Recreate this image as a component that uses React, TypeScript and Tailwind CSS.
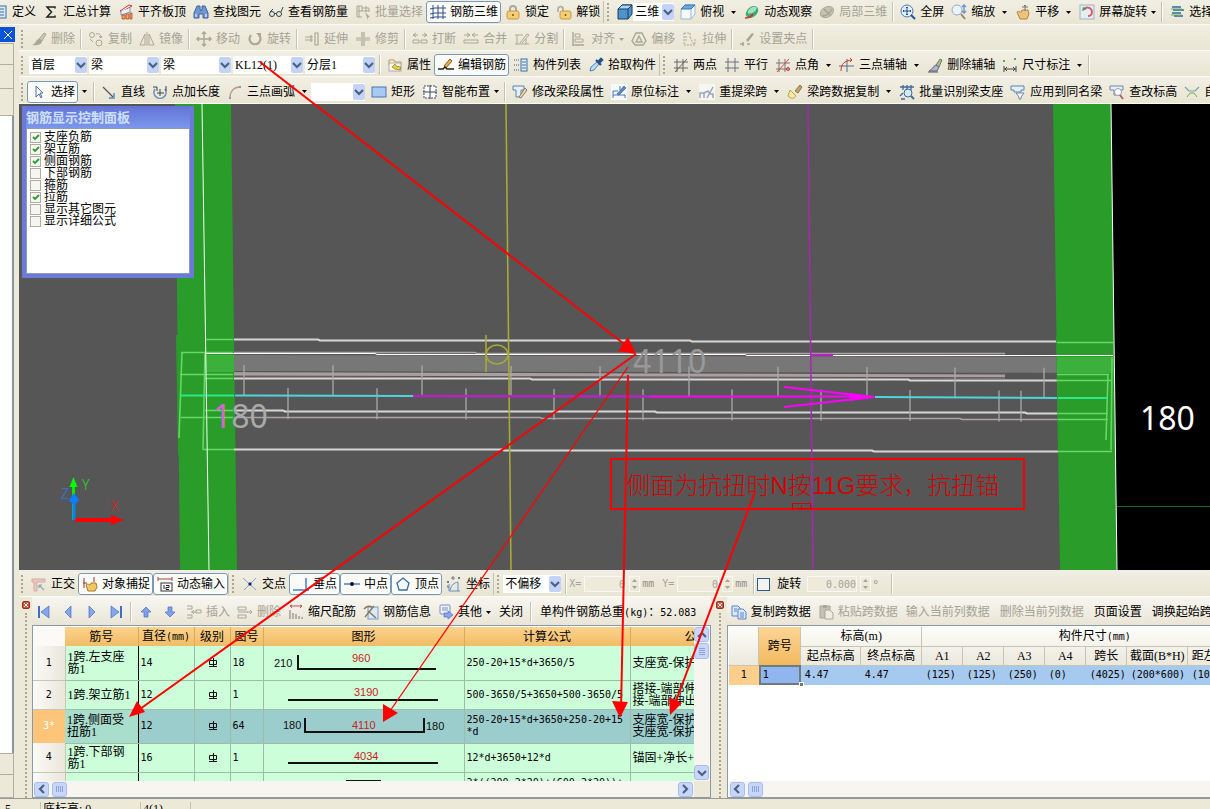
import type { ReactNode } from 'react'

const B = '#3a6ea5'
const G = '#a9a797'

// 16x16 drawings used on the toolbars
const icons: Record<string, ReactNode> = {
  define: <><rect x="2" y="2" width="12" height="12" fill="#dce9fb" stroke={B} /><path d="M4 5h8M4 8h8M4 11h8" stroke={B} /></>,
  sum: <path d="M12 4.500V3H4l4.500 5L4 13h8v-1.500" stroke="#222" strokeWidth="1.500" />,
  alignTop: <><path d="M2 7 11 1l3 1-9 5z" fill="#fff" stroke="#c33" /><path d="M3 7v4l9-3V4" fill="#eef3fc" stroke="#7b8db5" /><path d="M4 15V11h3v4zM8 15v-5h3v5zM12 15V9h2v6z" fill="#f0b04a" stroke="#a33" strokeWidth=".7" /></>,
  find: <><path d="M4 2h3v3l1 2 1-2V2h3l3 7v5h-5v-4H6v4H1V9z" fill="#6f97d2" stroke="#3d6199" /><path d="M3 10v3M13 10v3" stroke="#cfe0ff" strokeWidth="1.500" /></>,
  glasses: <><circle cx="4" cy="10" r="2.500" stroke="#345" /><circle cx="11" cy="10" r="2.500" stroke="#345" /><path d="M6.500 9.500h2M2 8l3-3M13 8l2-5" stroke="#345" /></>,
  batch: <><path d="M2 2h5v5H2zM2 7v6h5M7 4h7v4M7 7h7M4 2v11M11 2v6" stroke={G} /><path d="m10 8 5 5-2 .5V16z" fill={G} /></>,
  grid3d: <path d="M3 1v14M8 1v14M13 1v14M0 5l5-1h11M0 10l5-1h11M0 14l5-1h11" stroke="#2f4f8a" />,
  lock: <><path d="M5 8V5a3 3 0 0 1 6 0v3" stroke="#a9a9a0" strokeWidth="2" /><rect x="2" y="7" width="12" height="8" rx="2" fill="#f5cd74" stroke="#c59a42" /><path d="M8 10v2" stroke="#7a5510" strokeWidth="1.500" /></>,
  unlock: <><path d="M2 8V5a2.500 2.500 0 0 1 5 0v3" stroke="#a9a9a0" strokeWidth="1.600" /><rect x="4" y="7" width="11" height="8" rx="2" fill="#f5cd74" stroke="#c59a42" /><path d="M9.500 10v2" stroke="#7a5510" strokeWidth="1.500" /></>,
  cube: <><path d="m1 5 4-4h10v9l-4 5H1z" fill="#4f93c9" stroke="#173f66" /><path d="m1 5 4-4h10l-4 4z" fill="#a7d5f3" stroke="#173f66" /><path d="M11 5v10" stroke="#173f66" /></>,
  cubeTop: <><path d="m1 5 4-4h10v9l-4 5H1z" fill="#f4f9ff" stroke="#9db8d3" /><path d="m1 5 4-4h10l-4 4z" fill="#69abe0" stroke="#3b76a8" /><path d="M11 5v10" stroke="#9db8d3" /></>,
  orbit: <><ellipse cx="8" cy="8" rx="7" ry="5" transform="rotate(-40 8 8)" fill="#3fae72" /><path d="M4 7c2-4 6-5 8-4s-1 5-4 6-5 1-4-2z" fill="#a4dfc6" /><path d="M1 14c3 0 6-1 8-4" stroke="#c33" strokeWidth="1.600" /></>,
  part3d: <><ellipse cx="8" cy="8" rx="7" ry="5" transform="rotate(-30 8 8)" fill="#c5c2b2" stroke={G} /><path d="M3 12c4 0 8-3 10-7M5 5l6 6" stroke="#a5a394" strokeWidth="1.500" /></>,
  full: <><circle cx="7" cy="7" r="6" fill="#e4f0ff" stroke="#4b76b5" /><path d="M7 3v8M3 7h8M6 4l1-1 1 1M6 10l1 1 1-1M4 6 3 7l1 1M10 6l1 1-1 1" stroke="#234f96" /><path d="m11 11 4 4" stroke="#234f96" strokeWidth="2" /></>,
  zoom: <><circle cx="6" cy="6" r="5" fill="#eaf4ff" stroke="#9aa9bd" /><path d="m10 10 4 5" stroke="#9a8468" strokeWidth="2" /><path d="M13 1v8M11 3l2-2 2 2M11 7l2 2 2-2" stroke="#6b93c8" strokeWidth="1.300" /></>,
  pan: <><path d="M2 8c2-2 3 1 4 0l1-2h6l1 4-2 5H5z" fill="#edc27c" stroke="#b58538" /><path d="M10 1v6M7 3h6M9 2l1-1 1 1" stroke="#777" /></>,
  rotScreen: <><rect x="1" y="1" width="14" height="14" fill="#e4ecf4" stroke="#9db4cc" /><path d="M5 5c3-3 8-1 8 3 0 3-2 4-4 4" stroke="#e0566a" strokeWidth="1.800" /><path d="M3 7l1-4 4 2z" fill="#4a9a4a" /></>,
  selLayer: <><path d="M3 3h9M4 6h11M3 9h9M5 12h9" stroke="#2c6b9c" strokeWidth="1.600" /><path d="M2 5h11M2 11h11" stroke="#69a860" /></>,
  brush: <><path d="m8 8 5-6 2 1-4 7z" fill="#c9c6b6" stroke={G} /><path d="M8 8c-3 0-3 5-7 6 4 1 10 0 10-4z" fill={G} /></>,
  copyG: <><circle cx="4" cy="4" r="2.500" stroke={G} /><circle cx="11" cy="12" r="3" stroke={G} /><path d="M8 3c4-1 5 1 5 4M11 5l2 2 1-2M2 8l3 3" stroke={G} /></>,
  mirror: <path d="M6 3v11H1zM10 3v11h5zM8 1v14" stroke={G} />,
  move: <path d="M8 1v14M1 8h14M6 3l2-2 2 2M6 13l2 2 2-2M3 6 1 8l2 2M13 6l2 2-2 2" stroke={G} strokeWidth="1.400" />,
  rotate: <><path d="M4 4a5.500 5.500 0 1 0 8 0" stroke={G} strokeWidth="2.200" /><path d="M9 2h5v5z" fill={G} /></>,
  extend: <path d="M1 6h8M1 9h8M7 4v7M11 2h3v12h-3z" stroke={G} strokeWidth="1.200" />,
  trim: <path d="M1 7h5M10 7h5M1 9h5M10 9h5M7 1v14M9 1v14" stroke={G} strokeWidth="1.200" />,
  brk: <path d="M1 4h5M10 4h5M4 2 1 4l3 2M12 2l3 2-3 2M1 9h6v3H1zM9 9h6v3H9z" stroke={G} />,
  merge: <path d="M1 4h5M10 4h5M4 2l3 2-3 2M12 2 9 4l3 2M1 9h14v3H1z" stroke={G} />,
  split: <path d="M1 4h8M1 13h14M3 4v9M6 12l7-9 2 1-7 8M12 8v5" stroke={G} />,
  alignG: <><path d="M2 1v14M2 14h11" stroke={G} strokeWidth="1.400" /><path d="M4 3h5v3H4zM4 8h8v3H4z" stroke={G} /></>,
  offset: <path d="M5 2h6l4 8-3 4H4l-3-4zM8 5l3 6H5z" stroke={G} strokeWidth="1.400" />,
  stretch: <path d="M2 2h6v4M2 2v12h11V7M8 6l4 8M4 5v6" stroke={G} strokeDasharray="2 1" />,
  gripEdit: <><path d="M7 9 13 2l2 1-6 8z" fill={G} /><path d="M1 13h4M8 13h3M4 11v4" stroke={G} strokeWidth="1.500" /></>,
  props: <><path d="M2 3h5l1 2h6v3H2z" fill="#fff0c0" stroke="#b09c60" /><rect x="2" y="6" width="12" height="8" fill="#fdf9e8" stroke="#aaa" /><path d="m5 10 3-3 1 2 5 1-1 3-5-1z" fill="#e8d04a" stroke="#7a6a20" strokeWidth=".6" /></>,
  editBar: <><path d="m6 9 6-7 2 2-6 7z" fill="#e8b04c" stroke="#8b5a1c" /><path d="M0 12h5l2-2 2 2h7" stroke="#222" strokeWidth="1.500" /></>,
  list: <><path d="M1 3h3M1 8h3M1 13h3M5 3h1M5 8h1M5 13h1" stroke="#456" strokeDasharray="1 1" /><rect x="8" y="2" width="6" height="12" fill="#e3edfb" stroke={B} /><path d="M9 5h4M9 8h4M9 11h4" stroke={B} /></>,
  pick: <><path d="m2 14 1-4 6-5 2 2-5 6z" fill="#bcdcf8" stroke="#4d82bd" /><path d="m8 3 5 5M10 5l3-3 1 1-3 3" stroke="#27518a" strokeWidth="2.400" /></>,
  twoPt: <path d="M4 2v13M10 2v13M1 5h14M1 11h14M2 15 14 2" stroke="#666" />,
  parallel: <path d="M4 1v14M11 1v14M1 5h14M1 11h14" stroke="#6b6f80" />,
  ptAngle: <><path d="M4 2v13M10 2v13M1 6h14M1 12h14" stroke="#777" /><path d="M2 15 14 2" stroke="#d44" /><circle cx="13" cy="12" r="1.500" stroke="#c33" /></>,
  threeAx: <><path d="M8 2v13M0 9h15" stroke="#5a6b8a" /><path d="M2 14C2 7 5 4 13 3M11 1l2 2-2 2" stroke="#c33" /></>,
  delAx: <><path d="m9 8 4-6 2 1-3 7z" fill="#a6c870" stroke="#777" /><path d="M9 8c-3 1-3 4-7 6h8l2-4z" fill="#aab4d8" stroke="#667" /><path d="M1 15h10" stroke="#555" /></>,
  dim: <><path d="M2 9v6M14 9v6M2 12h12M5 10l-2 2 2 2M11 10l2 2-2 2" stroke="#444" /><path d="M1 4h2M12 2h2" stroke="#5aa85a" strokeWidth="2" /></>,
  cursor: <path d="M5 2v11l3-3 2 4 1-1-2-4h3z" fill="#fff" stroke="#4a6da8" />,
  line: <><path d="m2 3 10 10" stroke="#555" strokeWidth="1.200" /><path d="M13 9v5H8" stroke="#5b86b8" strokeWidth="1.400" /></>,
  ptLen: <><path d="M3 5a6 6 0 1 0 10 0" stroke="#6d8fba" strokeWidth="1.600" /><path d="M8 5v7M5 9h7M1 3h4v4M14 2v5" stroke="#345" /></>,
  arc: <><path d="M3 14C3 7 7 3 13 3" stroke="#b99" strokeWidth="1.400" /><path d="M2 13h2v2H2zM12 2h2v2h-2z" fill="#999" /></>,
  rect: <rect x="1" y="3" width="14" height="10" fill="#a9c9f5" stroke="#4d74b8" />,
  smart: <><rect x="2" y="2" width="12" height="12" fill="#fff" stroke="#446" strokeDasharray="2 1" /><path d="M8 1v5M8 10v5M1 8h5M10 8h5M7 7h2v2H7z" stroke="#345" /></>,
  editSeg: <><path d="M1 2h11v4H9v7H4V6H1z" fill="#e6f0fc" stroke="#5a82b5" /><path d="m7 13 6-9 2 2-6 8z" fill="#efd9a8" stroke="#876" /></>,
  label: <><rect width="16" height="16" fill="#f4f8ff" /><path d="M2 14V7h5M2 11h12v3M9 2v4" stroke="#4a78b5" /><path d="m6 10 7-8 2 2-7 7z" fill="#5f8bc6" stroke="#27518a" strokeWidth=".6" /></>,
  respan: <><rect width="16" height="16" fill="#f6f6f2" /><path d="M1 14V9h4v5M5 9l4-2 2 3h3v4M8 14l6-11" stroke="#9aa6b8" strokeWidth="1.500" /></>,
  dataCopy: <><path d="m8 7 5-6 2 2-4 6z" fill="#c9a063" stroke="#875" /><path d="m3 6 6 6c-2 3-5 3-8 0z" fill="#f5eca0" stroke="#b9a04a" /></>,
  identify: <><path d="M1 3h14M4 1v5M8 1v5M12 1v5M1 12l3-3M2 15h4" stroke="#3f6a9a" strokeWidth="1.300" /><circle cx="9" cy="9" r="4" fill="#d6e9fb" stroke="#3f6a9a" /><path d="m12 12 3 3" stroke="#3f6a9a" strokeWidth="2" /></>,
  apply: <><path d="M1 2h13v4h-3v2H4V6H1z" fill="#e6f0fc" stroke="#5a82b5" /><path d="M6 9h8l-3 4v2H9v-2z" fill="#fff" stroke="#6c87ad" /></>,
  checkH: <><path d="M1 2h13v4h-3v5H5V6H1z" fill="#e6f0fc" stroke="#6c87ad" /><circle cx="9" cy="8" r="3.500" fill="#fff" stroke="#99a" /><path d="m11 11 3 4" stroke="#a76a6a" strokeWidth="2" /></>,
  auto: <><path d="M1 3 5 7h6l4-4" stroke="#7aa0a8" strokeWidth="1.200" /><path d="m3 13 3-4h4l3 4" stroke="#7aa860" /></>,
  ortho: <><path d="M1 3h13v3H6v9H3V6H1z" fill="#eac6c0" stroke="#d9aaa4" /><path d="m8 9 5 5M8 9h3M8 9v3" stroke="#8aa" strokeWidth="1.200" /></>,
  snap: <><path d="M2 2v10M12 1v5M1 7h4" stroke="#933" /><path d="M4 9c2-2 3 0 4 0l1-2h5l1 4-2 4H6z" fill="#efc768" stroke="#a77a2a" /></>,
  dyn: <><path d="M1 1v4M15 1v4M1 3h14" stroke="#a44" /><rect x="4" y="7" width="11" height="8" fill="#fff" stroke="#333" /><path d="M7 9v4M9 9.500h3v2H9v2h3" stroke="#222" /></>,
  cross: <><path d="m1 2 13 12M14 2 2 14" stroke="#7da4dc" /><path d="M7 7h2v2H7z" fill="#225" stroke="#225" /></>,
  perp: <path d="M0 14h16M13 2v12" stroke="#4a7ec0" strokeWidth="1.500" />,
  mid: <><path d="M0 8h16" stroke="#4a7ec0" strokeWidth="1.500" /><circle cx="8" cy="8" r="2" fill="#113" /></>,
  penta: <path d="m8 2 6 5-2 7H4L2 7z" fill="#f4faff" stroke="#3a6ea5" strokeWidth="1.300" />,
  coord: <><path d="M3 8v7h11M4 14c2-6 4-7 8-8v9" stroke="#5c8fd0" /><path d="M1 5l2 2M3 5 1 7M12 1l2 2M14 1l-2 2M6 1h2v2H6zM1 10h1v2" stroke="#777" /></>,
  first: <><path d="M3 2v12" stroke="#3f6fc4" strokeWidth="2" /><path d="M13 2v12L5 8z" fill="#86a8ea" stroke="#3f6fc4" strokeWidth=".7" /></>,
  prev: <path d="M11 2v12L5 8z" fill="#86a8ea" stroke="#3f6fc4" strokeWidth=".7" />,
  next: <path d="M5 2v12l6-6z" fill="#86a8ea" stroke="#3f6fc4" strokeWidth=".7" />,
  last: <><path d="M13 2v12" stroke="#3f6fc4" strokeWidth="2" /><path d="M3 2v12l8-6z" fill="#86a8ea" stroke="#3f6fc4" strokeWidth=".7" /></>,
  up: <path d="m8 3 5 5h-3v5H6V8H3z" fill="#7f9fe6" stroke="#4a6fc8" strokeWidth=".7" />,
  down: <path d="m8 13 5-5h-3V3H6v5H3z" fill="#7f9fe6" stroke="#4a6fc8" strokeWidth=".7" />,
  ins: <path d="M1 2h5v3H1M1 11h5v3H1M5 8h5M8 6 6 8l2 2M10 6h5v3h-5z" stroke={G} />,
  del: <path d="M1 3h8v3H1zM1 8h10M1 11h8v3H1zM10 8h5M13 6l2 2-2 2" stroke={G} />,
  scale: <><path d="M2 6v9M5 9v6M8 10v5M11 12v3M14 13v2" stroke="#777" /><path d="M2 2h12M4 1 2 2l2 2M12 1l2 1-2 2" stroke="#b55" /></>,
  info: <><rect x="5" y="3" width="10" height="12" fill="#d9e8fb" stroke="#7d9cc6" /><path d="m2 13 9-11M5 7l8 7M1 5c3-4 6-3 8-2" stroke="#8a7a50" strokeWidth="1.400" /></>,
  other: <><rect x="2" y="1" width="10" height="9" rx="1" fill="#eef3fc" stroke="#7d8fc0" /><path d="M4 4h6M4 6h6" stroke="#7d8fc0" /><path d="M6 9h4V7l5 4-5 4v-2H6z" fill="#8ba6ea" stroke="#4a6fc8" strokeWidth=".7" /></>,
  copy: <><path d="M1 2h6l2 2v8H1z" fill="#dbe9ff" stroke="#5a82c8" /><path d="M7 5h5l3 3v7H7z" fill="#dbe9ff" stroke="#5a82c8" /><path d="M3 5h3M3 7h3M9 9h4M9 11h4M9 13h4" stroke="#5a82c8" /></>,
  paste: <><path d="M2 2h10v12H2z" fill="#c5c2b4" stroke={G} /><path d="M5 1h4v3H5z" fill={G} /><path d="M7 6h5l3 3v6H7z" fill="#efede2" stroke={G} /></>,
}

function Icon({ name }: { name: string }) {
  return (
    <svg viewBox="0 0 16 16" className="size-4 shrink-0" fill="none" aria-hidden="true">
      {icons[name]}
    </svg>
  )
}

function Caret() {
  return (
    <svg viewBox="0 0 5 3" className="h-[3px] w-[5px] shrink-0" aria-hidden="true">
      <path d="M0 0h5L2.500 3z" fill="currentColor" />
    </svg>
  )
}

type ItemProps = { icon?: string; label: string; off?: boolean; on?: boolean; menu?: 'wide' | 'tight' }

function Item({ icon, label, off, on, menu }: ItemProps) {
  return (
    <>
      <button
        type="button"
        disabled={off}
        aria-pressed={on}
        className={`flex h-[22px] shrink-0 items-center gap-1 whitespace-nowrap ${icon ? 'pr-[3px] pl-1' : 'px-[5px]'} ${
          off ? 'text-[#a5a394]' : 'text-black'
        } ${on ? 'rounded-[3px] bg-[#fbfbf8] outline -outline-offset-1 outline-[#7c98b8]' : ''}`}
      >
        {icon && <Icon name={icon} />}
        <span>{label}</span>
      </button>
      {menu && (
        <span className={`flex shrink-0 items-center ${menu === 'wide' ? 'w-[13px] justify-center' : 'w-[9px] pl-px'} ${off ? 'text-[#a5a394]' : 'text-black'}`}>
          <Caret />
        </span>
      )}
    </>
  )
}

function Sep() {
  return <span className="mx-[2px] h-5 w-[2px] shrink-0 border-l border-[#c5c2b0] bg-white" />
}

function Grip({ first }: { first?: boolean }) {
  return (
    <span className={`flex h-[22px] shrink-0 items-center justify-end pr-1 ${first ? 'w-2' : 'w-[10px] border-l border-[#c5c2b0]'}`}>
      <span className="h-[18px] border-l-2 border-dotted border-[#a9a693]" />
    </span>
  )
}

function Chevron({ d }: { d: string }) {
  return (
    <svg viewBox="0 0 12 12" className="size-3" fill="none" aria-hidden="true">
      <path d={d} stroke="#4a6185" strokeWidth="2.200" />
    </svg>
  )
}

function Combo({ value, name, width }: { value: string; name: string; width: string }) {
  return (
    <span className={`relative mr-[2px] flex h-[18px] shrink-0 bg-white ${width}`}>
      <select aria-label={name} className="w-full appearance-none bg-transparent pl-[2px] leading-[14px] outline-none">
        <option>{value}</option>
      </select>
      <span className="pointer-events-none absolute top-px right-0 flex h-4 w-3 items-center justify-center rounded-[2px] bg-[#c3d3f8]">
        <Chevron d="m2 4 4 4 4-4" />
      </span>
    </span>
  )
}

function ScrollButton({ d, label }: { d: string; label: string }) {
  return (
    <button type="button" aria-label={label} className="flex size-[15px] shrink-0 items-center justify-center rounded-[3px] border border-[#a9bdeb] bg-[#c8d6fb]">
      <Chevron d={d} />
    </button>
  )
}

function HScroll({ end }: { end?: boolean }) {
  return (
    <div className="flex h-4 shrink-0 items-center gap-[3px] bg-[#f6f5f0] px-px">
      <ScrollButton d="M8 2 4 6l4 4" label="向左滚动" />
      <span className="flex h-[15px] w-[15px] items-center justify-center gap-px rounded-[3px] border border-[#a9bdeb] bg-[#c8d6fb]">
        {[0, 1, 2, 3].map((i) => (
          <i key={i} className="h-[6px] w-px bg-[#8ba3dd]" />
        ))}
      </span>
      <span className="flex-1" />
      {end && <ScrollButton d="m4 2 4 4-4 4" label="向右滚动" />}
    </div>
  )
}

const panelOptions: [string, boolean][] = [
  ['支座负筋', true],
  ['架立筋', true],
  ['侧面钢筋', true],
  ['下部钢筋', false],
  ['箍筋', false],
  ['拉筋', true],
  ['显示其它图元', false],
  ['显示详细公式', false],
]

function DisplayPanel() {
  return (
    <section className="absolute top-[2px] left-[3px] flex h-[172px] w-[172px] flex-col border-4 border-t-0 border-[#6b79d8] bg-gradient-to-b from-[#6473d6] to-[#7f9cf0] to-15%">
      <h2 className="flex h-[22px] shrink-0 items-center pt-[2px] text-[13px] font-bold text-[#cfe0ff]">钢筋显示控制面板</h2>
      <ul className="flex-1 border border-[#8d9bb5] bg-white pt-[2px] pl-[3px]">
        {panelOptions.map(([label, checked]) => (
          <li key={label}>
            <label className="flex h-3 items-center gap-[3px] whitespace-nowrap">
              <span className="relative flex">
                <input type="checkbox" defaultChecked={checked} className="peer size-[11px] appearance-none border border-[#b0aca2] bg-[#f6f5f0]" />
                <svg viewBox="0 0 11 11" className="pointer-events-none absolute inset-0 hidden size-[11px] peer-checked:block" fill="none" aria-hidden="true">
                  <path d="m3 5 2 2 4-4" stroke="#2d9a33" strokeWidth="1.800" />
                </svg>
              </span>
              {label}
            </label>
          </li>
        ))}
      </ul>
    </section>
  )
}

const upperTicks = [244, 333, 422, 511, 600, 689, 778, 867, 955, 1044]
const lowerTicks = [288, 377, 466, 554, 643, 732, 821, 910, 999, 1021]

function Model() {
  return (
    <svg viewBox="19 104 1191 466" preserveAspectRatio="xMinYMin slice" className="absolute inset-0 size-full font-['Noto_Sans',sans-serif]" fill="none">
      <path d="M1111 104h99v466h-93z" fill="#000" />
      <path d="M1117 506.500h93" stroke="#0a6b1e" />
      <path d="M175 104h56l6 466h-57zM1053 104h58l6 466h-57z" fill="#2a9c2a" />
      <path d="M205 355 1113 357v16L205 371z" fill="#777" />
      <path d="M205 339.500 318 339.500 320 340.500 690 340.500 692 341.500 1060 341.500 1062 342.500H1113M205 378.500H530L532 379.500H908L910 380.500H1113M205 410.500H283L285 411.500H655L657 412.500H1025L1027 413.500H1110M203 449.500H502L504 450.500H872L874 451.500H1111" stroke="#d8d6d6" strokeWidth="2" />
      <path d="M181 352.500H475L477 353.500H1005M181 417.500H540L542 418.500H960L962 419.500H1108" stroke="#aaa4a4" strokeWidth="1.500" />
      <path d="M205 374 1005 376.500" stroke="#a99f9f" strokeWidth="4" />
      <path d="M205 376 1110 378" stroke="#555" />
      <g stroke="#aaa" strokeWidth="1.300">
        {upperTicks.map((x, i) => <path key={x} d={`M${x} ${365 + i * 0.3}v30`} />)}
        {lowerTicks.map((x, i) => <path key={x} d={`M${x} ${388 + i * 0.3}v31`} />)}
      </g>
      <path d="M235 395.500 413 396M875 397 1058 398" stroke="#4fd4d8" strokeWidth="2" />
      <path d="M176 335h58v120h-56zM1056 335h57v120h-55z" fill="#2a9c2a" />
      <path d="M205 355h29v17h-29zM1057 357h56v16h-56z" fill="#3bb03b" />
      <path d="M205 339.500h28M181 352.500h52M180 374.500h53M205 378.500h28M205 410.500h28M181 417.500h52M203 449.500h31M1057 342.500h56M1057 374.500h52M1057 380.500h54M1058 413.500h50M1058 419.500h50M1058 451.500h54" stroke="#66d966" strokeWidth="1.600" />
      <path d="m205 352-2 98M182 352l-3 86M1108 374l-2 66M1112 357l-1 93" stroke="#62d862" strokeWidth="1.600" />
      <path d="M180 395.500h54M1058 398h50" stroke="#2be88a" strokeWidth="2" />
      <path d="M205 353.500H375L377 354.500H745L747 355.500H1113" stroke="#fff" />
      <path d="M202 104 209 570M1111 104l6 466" stroke="#f4fff4" />
      <g stroke="#a8a834" strokeWidth="1.600">
        <path d="m506 104 5 466M486 335v37" />
        <ellipse cx="497" cy="354.500" rx="11" ry="9.500" />
      </g>
      <path d="m808 104 5 466" stroke="#a32bb0" strokeWidth="1.500" />
      <path d="M413 396 650 396.500M811 355h22" stroke="#b424c0" strokeWidth="2.500" />
      <path d="M650 396.500h222M784 387l90 10-90 10" stroke="#f0f" strokeWidth="2" />
      <path d="m850 393 26 4-26 4z" fill="#f0f" />
      <g fontSize="32">
        <text x="633" y="373" fill="#999">4110</text>
        <text x="213" y="428" fill="#aaa"><tspan fill="#d865d0">1</tspan>80</text>
        <text x="1140" y="430" fill="#fff">180</text>
      </g>
      <path d="M73.500 520v-35" stroke="#0e0" strokeWidth="3" />
      <path d="m73.500 477 4 10h-8z" fill="#0f0" />
      <path d="M75 520h38" stroke="#f00" strokeWidth="4" />
      <path d="m111 515 13 5-13 5z" fill="#f00" />
      <path d="M74 520v-18" stroke="#0a7cff" strokeWidth="3" />
      <path d="m74 493 5 7-5 6-5-6z" fill="#0a7cff" />
      <g fontSize="14" fontWeight="300">
        <text x="82" y="490" fill="#2bd82b">Y</text>
        <text x="111" y="511" fill="#d22">X</text>
        <text x="61" y="499" fill="#2a7ae0">Z</text>
      </g>
    </svg>
  )
}

type Bar = { no: string; name: string; dia: string; fig: string; path: string; marks: ReactNode; formula: string; desc: string; h: string; on?: boolean }

const bars: Bar[] = [
  {
    no: '1', name: '1跨.左支座\n筋1', dia: '14', fig: '18', formula: '250-20+15*d+3650/5', desc: '支座宽-保护层厚度', h: 'h-[34px]',
    path: 'M34 6v14h138',
    marks: <><text x="10" y="18">210</text><text x="88" y="13" fill="#c22">960</text></>,
  },
  {
    no: '2', name: '1跨.架立筋1', dia: '12', fig: '1', formula: '500-3650/5+3650+500-3650/5', desc: '搭接-端部伸出长度\n接-端部伸出长度', h: 'h-[29px]',
    path: 'M24 19h150',
    marks: <text x="90" y="15" fill="#c22">3190</text>,
  },
  {
    no: '3*', name: '1跨.侧面受\n扭筋1', dia: '12', fig: '64', formula: '250-20+15*d+3650+250-20+15\n*d', desc: '支座宽-保护层厚度\n支座宽-保护层厚度', h: 'h-[34px]', on: true,
    path: 'M41 6v14h119V6',
    marks: <><text x="19" y="17">180</text><text x="88" y="17" fill="#c22">4110</text><text x="162" y="18">180</text></>,
  },
  {
    no: '4', name: '1跨.下部钢\n筋1', dia: '16', fig: '1', formula: '12*d+3650+12*d', desc: '锚固+净长+锚固', h: 'h-[29px]',
    path: 'M24 19h150',
    marks: <text x="90" y="16" fill="#c22">4034</text>,
  },
]

const mono = "font-['DejaVu_Sans_Mono',monospace] text-[10px]"
const td = 'overflow-hidden border-r border-b border-[#9dbda8] p-0 pl-[2px] text-left whitespace-pre'
const th = 'border-r border-[#d8ab58] p-0 text-center font-normal whitespace-nowrap'
const rowHead = 'border-r border-b border-[#c9c5b4] bg-gradient-to-r from-[#fbfaf6] to-[#e9e6da] p-0 text-center font-normal'

function Grade() {
  return (
    <svg viewBox="0 0 10 10" className="mx-auto size-[10px]" fill="none" stroke="#111" aria-label="HRB400">
      <path d="M1.500 2.500h7v4h-7zM5.500 0v9M1 8.500h8" />
    </svg>
  )
}

function BarTable() {
  return (
    <table className="w-[754px] table-fixed border-collapse leading-3">
      <colgroup>
        <col className="w-8" />
        <col className="w-[73px]" />
        <col className="w-14" />
        <col className="w-9" />
        <col className="w-[33px]" />
        <col className="w-[201px]" />
        <col className="w-[166px]" />
        <col className="w-[157px]" />
      </colgroup>
      <thead>
        <tr className="h-[19px] bg-gradient-to-b from-[#fbd28d] to-[#f1bd66]">
          <th className="bg-[#fbfaf6] p-0" aria-label="序号" />
          <th className={th}>筋号</th>
          <th className={th}>直径<span className={mono}>(mm)</span></th>
          <th className={th}>级别</th>
          <th className={th}>图号</th>
          <th className={th}>图形</th>
          <th className={th}>计算公式</th>
          <th className={th}>公式描述</th>
        </tr>
      </thead>
      <tbody>
        {bars.map((b) => (
          <tr key={b.no} className={`${b.h} ${b.on ? 'bg-[#9bcdcd]' : 'bg-[#ccffd9]'}`}>
            <th className={`${mono} ${b.on ? 'bg-[#fdc579] p-0 text-center font-normal text-white' : rowHead}`}>{b.no}</th>
            <td className={`${td} border-r-black ${b.on ? 'bg-[#a9ddcc]' : ''}`}>{b.name}</td>
            <td className={`${td} ${mono}`}>{b.dia}</td>
            <td className={td}><Grade /></td>
            <td className={`${td} ${mono}`}>{b.fig}</td>
            <td className="border-r border-b border-[#9dbda8] p-0">
              <svg viewBox="0 0 200 28" className="block h-7 w-[200px] font-['Liberation_Sans',sans-serif] text-[11px]" fill="none">
                <path d={b.path} stroke="#111" strokeWidth="2" />
                <g fill="#111">{b.marks}</g>
              </svg>
            </td>
            <td className={`${td} ${mono} leading-3`}>{b.formula}</td>
            <td className={td}>{b.desc}</td>
          </tr>
        ))}
        <tr className="h-[29px] bg-[#ccffd9] align-top">
          <th className={rowHead} />
          <td className={`${td} border-r-black`} />
          <td className={td} />
          <td className={td} />
          <td className={td} />
          <td className="border-r border-[#9dbda8] p-0">
            <svg viewBox="0 0 200 28" className="block h-7 w-[200px]"><path d="M82 8h35" stroke="#111" strokeWidth="2" /></svg>
          </td>
          <td className={`${td} ${mono} pt-1`}>2*((200-2*20)+(600-2*20))+</td>
          <td className={td} />
        </tr>
      </tbody>
    </table>
  )
}

const spanHeads = ['起点标高', '终点标高', 'A1', 'A2', 'A3', 'A4', '跨长', '截面(B*H)', '距左边线距离']
const spanCells = ['4.47', '4.47', '(125)', '(125)', '(250)', '(0)', '(4025)', '(200*600)', '(100)']
const sth = 'border-r border-b border-[#c9c5b4] p-0 text-center font-normal whitespace-nowrap'

function SpanTable() {
  return (
    <table className="w-[539px] table-fixed border-collapse leading-3">
      <colgroup>
        <col className="w-[30px]" />
        <col className="w-[42px]" />
        <col className="w-[60px]" />
        <col className="w-[61px]" />
        <col className="w-[41px]" />
        <col className="w-[41px]" />
        <col className="w-[41px]" />
        <col className="w-[41px]" />
        <col className="w-[41px]" />
        <col className="w-[61px]" />
        <col className="w-20" />
      </colgroup>
      <thead className="bg-gradient-to-b from-[#fdfdfa] to-[#ebe8dc]">
        <tr className="h-[19px]">
          <th rowSpan={2} className={sth} aria-label="序号" />
          <th rowSpan={2} className={`${sth} bg-gradient-to-b from-[#fbd596] to-[#f2b95c]`}>跨号</th>
          <th colSpan={2} className={sth}>标高(m)</th>
          <th colSpan={7} className={sth}>构件尺寸<span className={mono}>(mm)</span></th>
        </tr>
        <tr className="h-[19px]">
          {spanHeads.map((h) => <th key={h} className={sth}>{h}</th>)}
        </tr>
      </thead>
      <tbody>
        <tr className={`h-5 bg-[#a6c9ef] ${mono}`}>
          <th className="bg-[#fcd08c] p-0 text-center font-normal">1</th>
          <td className="relative bg-[#8fb6ee] p-0 pl-1 outline-2 -outline-offset-2 outline-[#71797c]">
            1
            <i className="absolute -right-[3px] -bottom-[2px] size-[5px] border border-white bg-[#71797c]" />
          </td>
          {spanCells.map((c, i) => <td key={i} className="p-0 pl-1 whitespace-nowrap">{c}</td>)}
        </tr>
      </tbody>
    </table>
  )
}

function PanelEdge() {
  return (
    <div className="flex w-[13px] shrink-0 flex-col items-center gap-1 pt-1">
      <button type="button" aria-label="关闭面板" className="size-2 rounded-[2px] border border-[#8c3424] bg-[#d4533c]">
        <svg viewBox="0 0 6 6" className="size-[6px]" aria-hidden="true"><path d="m1 1 4 4M5 1 1 5" stroke="#fff" /></svg>
      </button>
      <span className="flex-1 border-l-2 border-dotted border-[#a9a693]" />
    </div>
  )
}

function NumberBox({ name, value, width }: { name: string; value: string; width: string }) {
  return (
    <>
      <input aria-label={name} disabled defaultValue={value} className={`h-4 shrink-0 border border-[#f8f7f0] bg-[#eeebdd] text-right text-[#a5a394] ${mono} ${width}`} />
      <span className="mr-[2px] ml-[3px] flex h-4 w-[11px] shrink-0 flex-col items-center justify-center gap-1 border border-[#f8f7f0] text-[#a5a394]">
        <i className="rotate-180"><Caret /></i>
        <Caret />
      </span>
    </>
  )
}

function NavButton({ icon, label }: { icon: string; label: string }) {
  return (
    <button type="button" aria-label={label} className="flex w-6 shrink-0 justify-center"><Icon name={icon} /></button>
  )
}

// Red call-outs that run across the toolbar, the model and the bar table
function Callouts() {
  return (
    <svg viewBox="0 0 1210 809" className="pointer-events-none absolute top-0 left-0 h-[809px] w-[1210px] font-['Liberation_Sans','Noto_Sans_CJK_SC',sans-serif]" fill="none" stroke="#f00">
      <path d="m260 62 368 285M636 354 140 709M628 375l-7 335M755 492l-81 214" strokeWidth="2" />
      <path d="M628 367 390 711" strokeWidth="1.300" />
      <path d="m636 354-8-17-10 14zM129 717l8-16 8 11zM383 722v-18l15 9zM620 718l-8-17 16 1zM670 715l-1-18 13 6z" fill="#f00" stroke="none" />
      <rect x="611" y="459" width="413" height="50" strokeWidth="2" />
      <clipPath id="note"><rect x="611" y="459" width="413" height="51" /></clipPath>
      <g clipPath="url(#note)" fill="#d00606" stroke="none" fontSize="24" textAnchor="middle" fontWeight="300">
        <text x="813" y="494">侧面为抗扭时N按11G要求，抗扭锚</text>
        <text x="802" y="522">固</text>
      </g>
    </svg>
  )
}

const bar = 'flex shrink-0 items-center overflow-hidden border-b border-[#fbfaf4] bg-gradient-to-b from-[#f1efe4] to-[#e9e5d3]'

export default function App() {
  return (
    <div className="relative flex min-h-screen w-full flex-col overflow-hidden bg-[#ece9d8] font-['Liberation_Serif','Noto_Sans_CJK_SC',serif] text-[12px] leading-[14px] text-black">
      <header className={`${bar} h-[25px]`}>
        <div className="-ml-3 flex items-center">
          <Item icon="define" label="定义" />
          <Item icon="sum" label="汇总计算" />
          <Item icon="alignTop" label="平齐板顶" />
          <Item icon="find" label="查找图元" />
          <Item icon="glasses" label="查看钢筋量" />
          <Item icon="batch" label="批量选择" off />
          <Item icon="grid3d" label="钢筋三维" on />
          <Item icon="lock" label="锁定" />
          <Item icon="unlock" label="解锁" />
          <Grip />
          <span className="flex shrink-0 items-center pl-1">
            <Icon name="cube" />
            <Combo name="视图" value="三维" width="w-[41px]" />
          </span>
          <Item icon="cubeTop" label="俯视" menu="wide" />
          <Item icon="orbit" label="动态观察" />
          <Item icon="part3d" label="局部三维" off />
          <Sep />
          <Item icon="full" label="全屏" />
          <Item icon="zoom" label="缩放" menu="wide" />
          <Item icon="pan" label="平移" menu="wide" />
          <Item icon="rotScreen" label="屏幕旋转" menu="tight" />
          <Sep />
          <Item icon="selLayer" label="选择楼层" />
        </div>
      </header>

      <div className="flex flex-1">
        <aside className="flex w-[19px] shrink-0 flex-col">
          <button type="button" aria-label="关闭" className="mt-[2px] flex h-[15px] w-[15px] shrink-0 items-center justify-center bg-[#0a52d8]">
            <svg viewBox="0 0 8 8" className="size-2" aria-hidden="true"><path d="m0 0 8 8M8 0 0 8" stroke="#fff" /></svg>
          </button>
          <div className="mt-px h-[22px] w-[14px] shrink-0 border border-l-0 border-[#aeb0a4]" />
          <div className="h-[23px] w-[14px] shrink-0 border-r border-[#aeb0a4]" />
          <div className="h-[28px] w-[14px] shrink-0 border border-l-0 border-[#aeb0a4]" />
          <div className="w-[14px] flex-1 border-r-2 border-[#8795a5] bg-white" />
          <div className="h-[22px] w-[14px] shrink-0 border border-l-0 border-[#aeb0a4]" />
          <div className="h-[23px] w-[14px] shrink-0 border-r border-b border-[#aeb0a4]" />
        </aside>

        <main className="flex min-w-0 flex-1 flex-col">
          <div className={`${bar} h-[26px] pt-[3px]`}>
            <Grip first />
            <Item icon="brush" label="删除" off />
            <Sep />
            <Item icon="copyG" label="复制" off />
            <Item icon="mirror" label="镜像" off />
            <Sep />
            <Item icon="move" label="移动" off />
            <Item icon="rotate" label="旋转" off />
            <Sep />
            <Item icon="extend" label="延伸" off />
            <Item icon="trim" label="修剪" off />
            <Sep />
            <Item icon="brk" label="打断" off />
            <Item icon="merge" label="合并" off />
            <Item icon="split" label="分割" off />
            <Sep />
            <Item icon="alignG" label="对齐" off menu="tight" />
            <Item icon="offset" label="偏移" off />
            <Item icon="stretch" label="拉伸" off />
            <Sep />
            <Item icon="gripEdit" label="设置夹点" off />
            <Sep />
          </div>

          <div className={`${bar} h-[26px] pt-[3px]`}>
            <Grip first />
            <span className="w-[2px] shrink-0" />
            <Combo name="楼层" value="首层" width="w-[58px]" />
            <Combo name="构件类别" value="梁" width="w-[70px]" />
            <Combo name="构件类型" value="梁" width="w-[70px]" />
            <Combo name="构件" value="KL12(1)" width="w-[70px]" />
            <Combo name="分层" value="分层1" width="w-[70px]" />
            <Sep />
            <Item icon="props" label="属性" />
            <Item icon="editBar" label="编辑钢筋" on />
            <Item icon="list" label="构件列表" />
            <Item icon="pick" label="拾取构件" />
            <Grip />
            <Item icon="twoPt" label="两点" />
            <Item icon="parallel" label="平行" />
            <Item icon="ptAngle" label="点角" menu="wide" />
            <Item icon="threeAx" label="三点辅轴" menu="wide" />
            <Item icon="delAx" label="删除辅轴" />
            <Item icon="dim" label="尺寸标注" menu="wide" />
            <Sep />
          </div>

          <div className={`${bar} h-[27px] pt-[3px]`}>
            <Grip first />
            <Item icon="cursor" label="选择" on menu="wide" />
            <Sep />
            <Item icon="line" label="直线" />
            <Item icon="ptLen" label="点加长度" />
            <Item icon="arc" label="三点画弧" menu="wide" />
            <Combo name="画弧方式" value="" width="w-[54px]" />
            <Item icon="rect" label="矩形" />
            <Item icon="smart" label="智能布置" menu="tight" />
            <Sep />
            <Item icon="editSeg" label="修改梁段属性" />
            <Item icon="label" label="原位标注" menu="wide" />
            <Item icon="respan" label="重提梁跨" menu="wide" />
            <Item icon="dataCopy" label="梁跨数据复制" menu="wide" />
            <Item icon="identify" label="批量识别梁支座" />
            <Item icon="apply" label="应用到同名梁" />
            <Item icon="checkH" label="查改标高" />
            <Item icon="auto" label="自动布置" />
          </div>

          <div className="relative min-h-[300px] flex-1 overflow-hidden bg-[#565656]">
            <Model />
            <DisplayPanel />
          </div>

          <div className={`${bar} h-[27px] pt-[2px]`}>
            <Grip first />
            <Item icon="ortho" label="正交" />
            <Item icon="snap" label="对象捕捉" on />
            <Item icon="dyn" label="动态输入" on />
            <Grip />
            <Item icon="cross" label="交点" />
            <Item icon="perp" label="垂点" on />
            <Item icon="mid" label="中点" on />
            <Item icon="penta" label="顶点" on />
            <Item icon="coord" label="坐标" />
            <Grip />
            <Combo name="偏移方式" value="不偏移" width="w-[58px]" />
            <Sep />
            <span className={`w-[15px] shrink-0 text-[#a5a394] ${mono}`}>X=</span>
            <NumberBox name="X" value="0" width="w-[42px]" />
            <span className={`w-5 shrink-0 text-[#8f8d80] ${mono}`}>mm</span>
            <span className={`w-[15px] shrink-0 text-[#a5a394] ${mono}`}>Y=</span>
            <NumberBox name="Y" value="0" width="w-[42px]" />
            <span className={`w-4 shrink-0 text-[#8f8d80] ${mono}`}>mm</span>
            <Sep />
            <label className="mr-[6px] flex shrink-0 items-center gap-[7px]">
              <input type="checkbox" className="size-[13px] appearance-none border border-[#2c5a8c] bg-[#f4f4ee]" />
              旋转
            </label>
            <NumberBox name="旋转角度" value="0.000" width="w-[50px]" />
            <span className="w-4 shrink-0 text-[#8f8d80]">°</span>
            <Sep />
          </div>

          <div className="flex h-[201px] shrink-0">
            <section className="flex w-7/12 min-w-0 shrink-0 pr-[3px]">
              <PanelEdge />
              <div className="flex min-w-0 flex-1 flex-col">
                <div className="flex h-7 shrink-0 items-center overflow-hidden bg-gradient-to-b from-[#f7f6f0] to-[#e9e5d6] pt-[2px]">
                  <NavButton icon="first" label="首条" />
                  <NavButton icon="prev" label="上一条" />
                  <NavButton icon="next" label="下一条" />
                  <NavButton icon="last" label="末条" />
                  <Sep />
                  <NavButton icon="up" label="上移" />
                  <NavButton icon="down" label="下移" />
                  <Item icon="ins" label="插入" off />
                  <Item icon="del" label="删除" off />
                  <Item icon="scale" label="缩尺配筋" />
                  <Item icon="info" label="钢筋信息" />
                  <Item icon="other" label="其他" menu="tight" />
                  <Item label="关闭" />
                  <Sep />
                  <span className="pl-[6px] whitespace-nowrap">单构件钢筋总重<span className={mono}>(kg)</span>：<span className={mono}>52.083</span></span>
                </div>
                <div className="flex min-h-0 flex-1 flex-col border border-[#8a9aac] bg-white">
                  <div className="flex min-h-0 flex-1">
                    <div className="min-w-0 flex-1 overflow-hidden pt-px">
                      <BarTable />
                    </div>
                    <div className="flex w-4 shrink-0 flex-col items-center gap-px bg-[#f6f5f0] py-px">
                      <ScrollButton d="m2 8 4-4 4 4" label="向上滚动" />
                      <span className="flex h-4 w-[15px] flex-col items-center justify-center gap-px rounded-[3px] border border-[#a9bdeb] bg-[#c8d6fb]">
                        {[0, 1, 2, 3].map((i) => (
                          <i key={i} className="h-px w-[6px] bg-[#8ba3dd]" />
                        ))}
                      </span>
                      <span className="flex-1" />
                      <ScrollButton d="m2 4 4 4 4-4" label="向下滚动" />
                    </div>
                  </div>
                  <div className="flex">
                    <div className="min-w-0 flex-1"><HScroll end /></div>
                    <span className="w-4 bg-[#ece9d8]" />
                  </div>
                </div>
              </div>
            </section>

            <section className="flex min-w-0 flex-1">
              <PanelEdge />
              <div className="flex min-w-0 flex-1 flex-col">
                <div className="flex h-7 shrink-0 items-center overflow-hidden bg-gradient-to-b from-[#f7f6f0] to-[#e9e5d6] pt-[2px]">
                  <Item icon="copy" label="复制跨数据" />
                  <Item icon="paste" label="粘贴跨数据" off />
                  <Item label="输入当前列数据" off />
                  <Item label="删除当前列数据" off />
                  <Item label="页面设置" />
                  <Item label="调换起始跨" />
                </div>
                <div className="flex min-h-0 flex-1 flex-col border border-r-0 border-[#8a9aac] bg-white pl-px">
                  <div className="min-h-0 flex-1 overflow-hidden pt-px">
                    <SpanTable />
                  </div>
                  <HScroll />
                </div>
              </div>
            </section>
          </div>
        </main>
      </div>

      <footer className="flex h-[11px] shrink-0 overflow-hidden border-t border-[#9a9a8e] pt-[3px]">
        <span className="w-[41px] shrink-0 border-r border-[#c5c2b0] pl-[5px]">5</span>
        <span className="w-[100px] shrink-0 border-r border-[#c5c2b0] pl-[2px]">底标高: 0</span>
        <span className="w-[50px] shrink-0 border-r border-[#c5c2b0] pl-[2px]">4(1)</span>
      </footer>

      <Callouts />
    </div>
  )
}
